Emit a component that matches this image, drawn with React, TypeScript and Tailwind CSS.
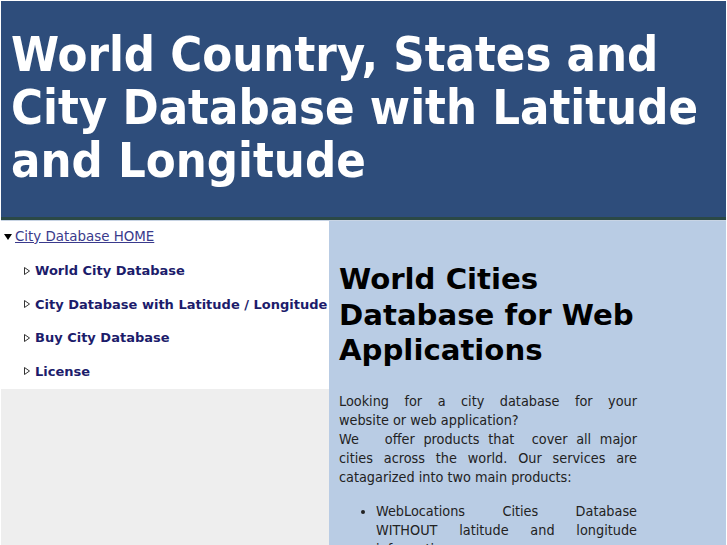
import React from 'react';

const menuItems = [
  'World City Database',
  'City Database with Latitude / Longitude',
  'Buy City Database',
  'License',
];

const OpenTriangle = () => (
  <svg className="w-[8px] h-[6px] shrink-0" viewBox="0 0 8 6">
    <path d="M0 0 L8 0 L4 6 Z" fill="#000" />
  </svg>
);

const ClosedTriangle = () => (
  <svg className="w-[6px] h-[8px] shrink-0" viewBox="0 0 6 8">
    <path d="M0.5 0.5 L5.5 4 L0.5 7.5 Z" fill="#fff" stroke="#333" strokeWidth="1" />
  </svg>
);

// lines that stretch to the full column width
const Just: React.FC<{ children: React.ReactNode }> = ({ children }) => (
  <div className="text-justify [text-align-last:justify]">{children}</div>
);

const App: React.FC = () => {
  return (
    <div className="w-[727px] h-[545px] overflow-hidden bg-white p-px font-['DejaVu_Sans',sans-serif]">
      <header className="bg-[#2e4d7b] h-[219px] pl-[10px] pr-[20px] pt-[27px] border-b-[3px] border-[#2b4946]">
        <h1 className="text-white font-bold text-[48.5px] leading-[53px] font-['DejaVu_Sans_Condensed','DejaVu_Sans',sans-serif]">
          World Country, States and City Database with Latitude and Longitude
        </h1>
      </header>
      <div className="flex h-[400px] border-t border-[#c8d4e4]">
        <nav className="w-[328px] shrink-0 flex flex-col bg-[#eeeeee]">
          <div className="bg-white pb-[1px]">
            <div className="flex items-center gap-[3px] pl-[3px] h-[32px]">
              <OpenTriangle />
              <a href="#" className="text-[13.4px] text-[#3a3a8c] underline">City Database HOME</a>
            </div>
            <ul className="pl-[23px] mt-[1px]">
              {menuItems.map(item => (
                <li key={item} className="flex items-center gap-[5px] h-[33.5px]">
                  <ClosedTriangle />
                  <span className="text-[13px] font-bold text-[#1c1c6b] whitespace-nowrap">{item}</span>
                </li>
              ))}
            </ul>
          </div>
          <div className="pl-[98px] mt-[152px] text-[13px] leading-[19px] text-[#c07070] whitespace-nowrap font-['DejaVu_Sans_Condensed','DejaVu_Sans',sans-serif]">
            World City Database
          </div>
        </nav>
        <main className="flex-1 bg-[#b9cce4] pl-[10px] pt-[41px]">
          <div className="w-[298px]">
            <h2 className="text-[29.2px] leading-[35.5px] font-bold text-black whitespace-nowrap">
              World Cities
              <br />
              Database for Web
              <br />
              Applications
            </h2>
            <div className="font-['DejaVu_Sans_Condensed','DejaVu_Sans',sans-serif] text-[14.3px] leading-[19px] text-[#222]">
              <div className="mt-[23px]">
                <Just>Looking for a city database for your</Just>
                <div>website or web application?</div>
                <Just>We&nbsp;&nbsp; offer products that&nbsp; cover all major</Just>
                <Just>cities across the world. Our services are</Just>
                <div>catagarized into two main products:</div>
              </div>
              <ul className="mt-[15px] pl-[37px] list-disc">
                <li>
                  <Just>WebLocations Cities Database</Just>
                  <Just>WITHOUT latitude and longitude</Just>
                  <div>information</div>
                </li>
              </ul>
            </div>
          </div>
        </main>
      </div>
    </div>
  );
};

export default App;
